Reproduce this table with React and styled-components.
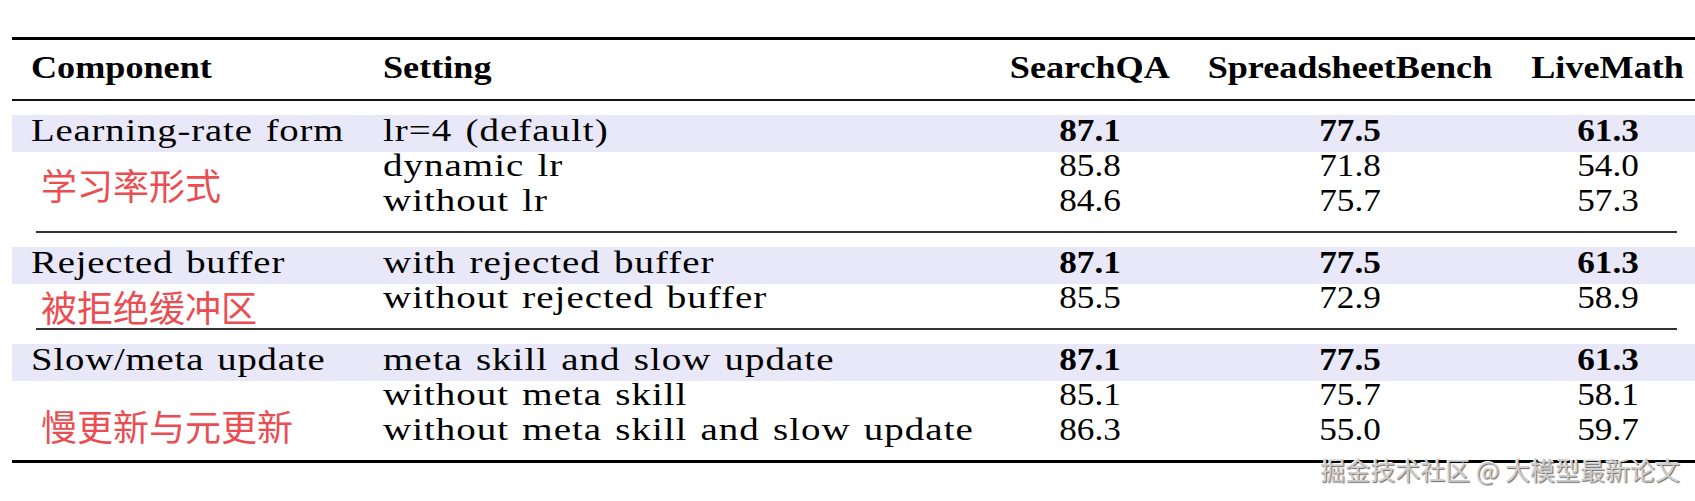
import React from "react";
import styled, { createGlobalStyle } from "styled-components";

const GlobalStyle = createGlobalStyle`
  html, body {
    margin: 0;
    padding: 0;
    background: #fff;
  }
  body {
    font-family: "Liberation Serif", "Times New Roman", serif;
    color: #000;
  }
`;

const COLS = "371px 627px 160px 360px 156px 1fr";

const sections = [
  {
    name: "Learning-rate form",
    note: "学习率形式",
    noteTop: 16,
    rows: [
      ["lr=4 (default)", "87.1", "77.5", "61.3"],
      ["dynamic lr", "85.8", "71.8", "54.0"],
      ["without lr", "84.6", "75.7", "57.3"],
    ],
  },
  {
    name: "Rejected buffer",
    note: "被拒绝缓冲区",
    noteTop: 6,
    rows: [
      ["with rejected buffer", "87.1", "77.5", "61.3"],
      ["without rejected buffer", "85.5", "72.9", "58.9"],
    ],
  },
  {
    name: "Slow/meta update",
    note: "慢更新与元更新",
    noteTop: 28,
    rows: [
      ["meta skill and slow update", "87.1", "77.5", "61.3"],
      ["without meta skill", "85.1", "75.7", "58.1"],
      ["without meta skill and slow update", "86.3", "55.0", "59.7"],
    ],
  },
];

const heads = ["Component", "Setting", "SearchQA", "SpreadsheetBench", "LiveMath"];

const Page = styled.div`
  position: relative;
  width: 1695px;
  height: 501px;
  padding: 37px 0 0 12px;
  box-sizing: border-box;
  overflow: hidden;
`;

const Table = styled.div`
  border-top: 3px solid #000;
  border-bottom: 3px solid #000;
`;

const HeadRow = styled.div`
  display: grid;
  grid-template-columns: ${COLS};
  height: 59px;
  line-height: 55px;
  border-bottom: 2px solid #111;
  font-size: 32px;
  font-weight: 700;
`;

const Section = styled.div`
  display: grid;
  grid-template-columns: ${COLS};
  grid-auto-rows: 35px;
  padding: 14px 0 11px;
  font-size: 32px;
  line-height: 31px;
`;

const Band = styled.div`
  grid-row: 1;
  grid-column: 1 / -1;
  background: #e8e8f8;
  box-shadow: 0 2px 0 #e8e8f8;
`;

const Cell = styled.div`
  grid-row: ${(p) => p.$row};
  grid-column: ${(p) => p.$col};
  text-align: ${(p) => (p.$col > 2 ? "center" : "left")};
  padding-left: ${(p) => (p.$col === 1 ? "19px" : "0")};
  white-space: nowrap;
  font-weight: ${(p) => (p.$bold ? 700 : "inherit")};
`;

// the LaTeX face is wider than Times, stretch each kind of text a little
const Txt = styled.span`
  display: inline-block;
  transform: scaleX(${(p) => p.$sx});
  transform-origin: ${(p) => (p.$center ? "center" : "left")};
  letter-spacing: ${(p) => p.$ls || 0}px;
  word-spacing: ${(p) => p.$ws || 0}px;
`;

const Note = styled.div`
  grid-column: 1;
  grid-row: 2 / span ${(p) => p.$span};
  align-self: start;
  padding: ${(p) => p.$top}px 0 0 29px;
  font-family: "Noto Sans CJK SC", sans-serif;
  font-size: 36px;
  line-height: 36px;
  color: #eb4d52;
  white-space: nowrap;
`;

const MidRule = styled.div`
  height: 2px;
  margin: 0 18px 0 24px;
  background: #333;
`;

const Watermark = styled.div`
  position: absolute;
  right: 15px;
  top: 457px;
  font-family: "Noto Sans CJK SC", sans-serif;
  font-size: 25px;
  line-height: 25px;
  color: #cdcdcd;
  text-shadow: 1px 1px 1px rgba(0, 0, 0, 0.6), -1px -1px 0 #fff;
  white-space: nowrap;
`;

const App = () => {
  return (
    <React.Fragment>
      <GlobalStyle />
      <Page>
        <Table>
          <HeadRow>
            {heads.map((h, i) => (
              <Cell key={h} $row={1} $col={i + 1}>
                <Txt $sx={1.13} $center={i > 1}>{h}</Txt>
              </Cell>
            ))}
          </HeadRow>
          {sections.map((s, si) => (
            <React.Fragment key={s.name}>
              {si > 0 && <MidRule />}
              <Section>
                <Band />
                <Cell $row={1} $col={1}>
                  <Txt $sx={1.21} $ls={0.7} $ws={2}>{s.name}</Txt>
                </Cell>
                <Note $span={s.rows.length - 1 || 1} $top={s.noteTop}>
                  {s.note}
                </Note>
                {s.rows.map((r, ri) => (
                  <React.Fragment key={r[0]}>
                    <Cell $row={ri + 1} $col={2}>
                      <Txt $sx={1.22} $ls={0.8} $ws={2}>{r[0]}</Txt>
                    </Cell>
                    {r.slice(1).map((v, vi) => (
                      <Cell key={vi} $row={ri + 1} $col={vi + 3} $bold={ri === 0}>
                        <Txt $sx={1.1} $center>{v}</Txt>
                      </Cell>
                    ))}
                  </React.Fragment>
                ))}
              </Section>
            </React.Fragment>
          ))}
        </Table>
        <Watermark>掘金技术社区 @ 大模型最新论文</Watermark>
      </Page>
    </React.Fragment>
  );
};

export default App;
